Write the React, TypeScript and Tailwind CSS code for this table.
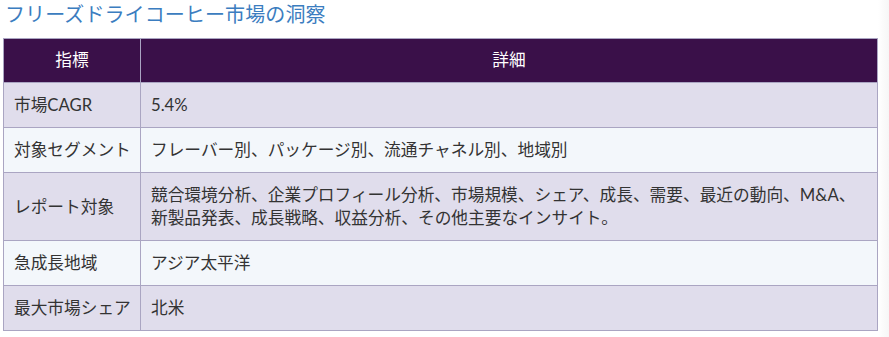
import React from 'react';

const rows: { label: string; detail: string }[] = [
  { label: '市場CAGR', detail: '5.4%' },
  { label: '対象セグメント', detail: 'フレーバー別、パッケージ別、流通チャネル別、地域別' },
  {
    label: 'レポート対象',
    detail:
      '競合環境分析、企業プロフィール分析、市場規模、シェア、成長、需要、最近の動向、M&A、新製品発表、成長戦略、収益分析、その他主要なインサイト。',
  },
  { label: '急成長地域', detail: 'アジア太平洋' },
  { label: '最大市場シェア', detail: '北米' },
];

const App = () => {
  return (
    <div className="w-[889px] h-[337px] bg-white flex font-['Lato','Noto_Sans_CJK_JP',sans-serif] text-[#333333] overflow-hidden">
      <div className="w-[878px] pl-[3px]">
        <h2 className="text-[20px] leading-[28px] text-[#3b7dc0] pl-[2px] tracking-[0.1px]">
          フリーズドライコーヒー市場の洞察
        </h2>
        <table className="mt-[10px] w-[875px] border-collapse border border-[#aaa5c2] text-[16.7px] leading-[23px]">
          <thead>
            <tr className="bg-[#3a1049] text-white">
              <th className="w-[137px] h-[44px] font-normal text-center border border-[#aaa5c2]">指標</th>
              <th className="font-normal text-center border border-[#aaa5c2]">詳細</th>
            </tr>
          </thead>
          <tbody>
            {rows.map((r, i) => (
              <tr key={r.label} className={i % 2 === 0 ? 'bg-[#e0ddec]' : 'bg-[#f3f7fb]'}>
                <td className="pl-[10px] pr-[4px] pt-[11px] pb-[10px] border border-[#aaa5c2] whitespace-nowrap align-middle">
                  {r.label}
                </td>
                <td className="pl-[10px] pr-[6px] pt-[11px] pb-[10px] border border-[#aaa5c2] align-middle">
                  {r.detail}
                </td>
              </tr>
            ))}
          </tbody>
        </table>
      </div>
      <div className="flex-1 bg-gradient-to-r from-white to-[#f6f6f6]" />
    </div>
  );
};

export default App;
